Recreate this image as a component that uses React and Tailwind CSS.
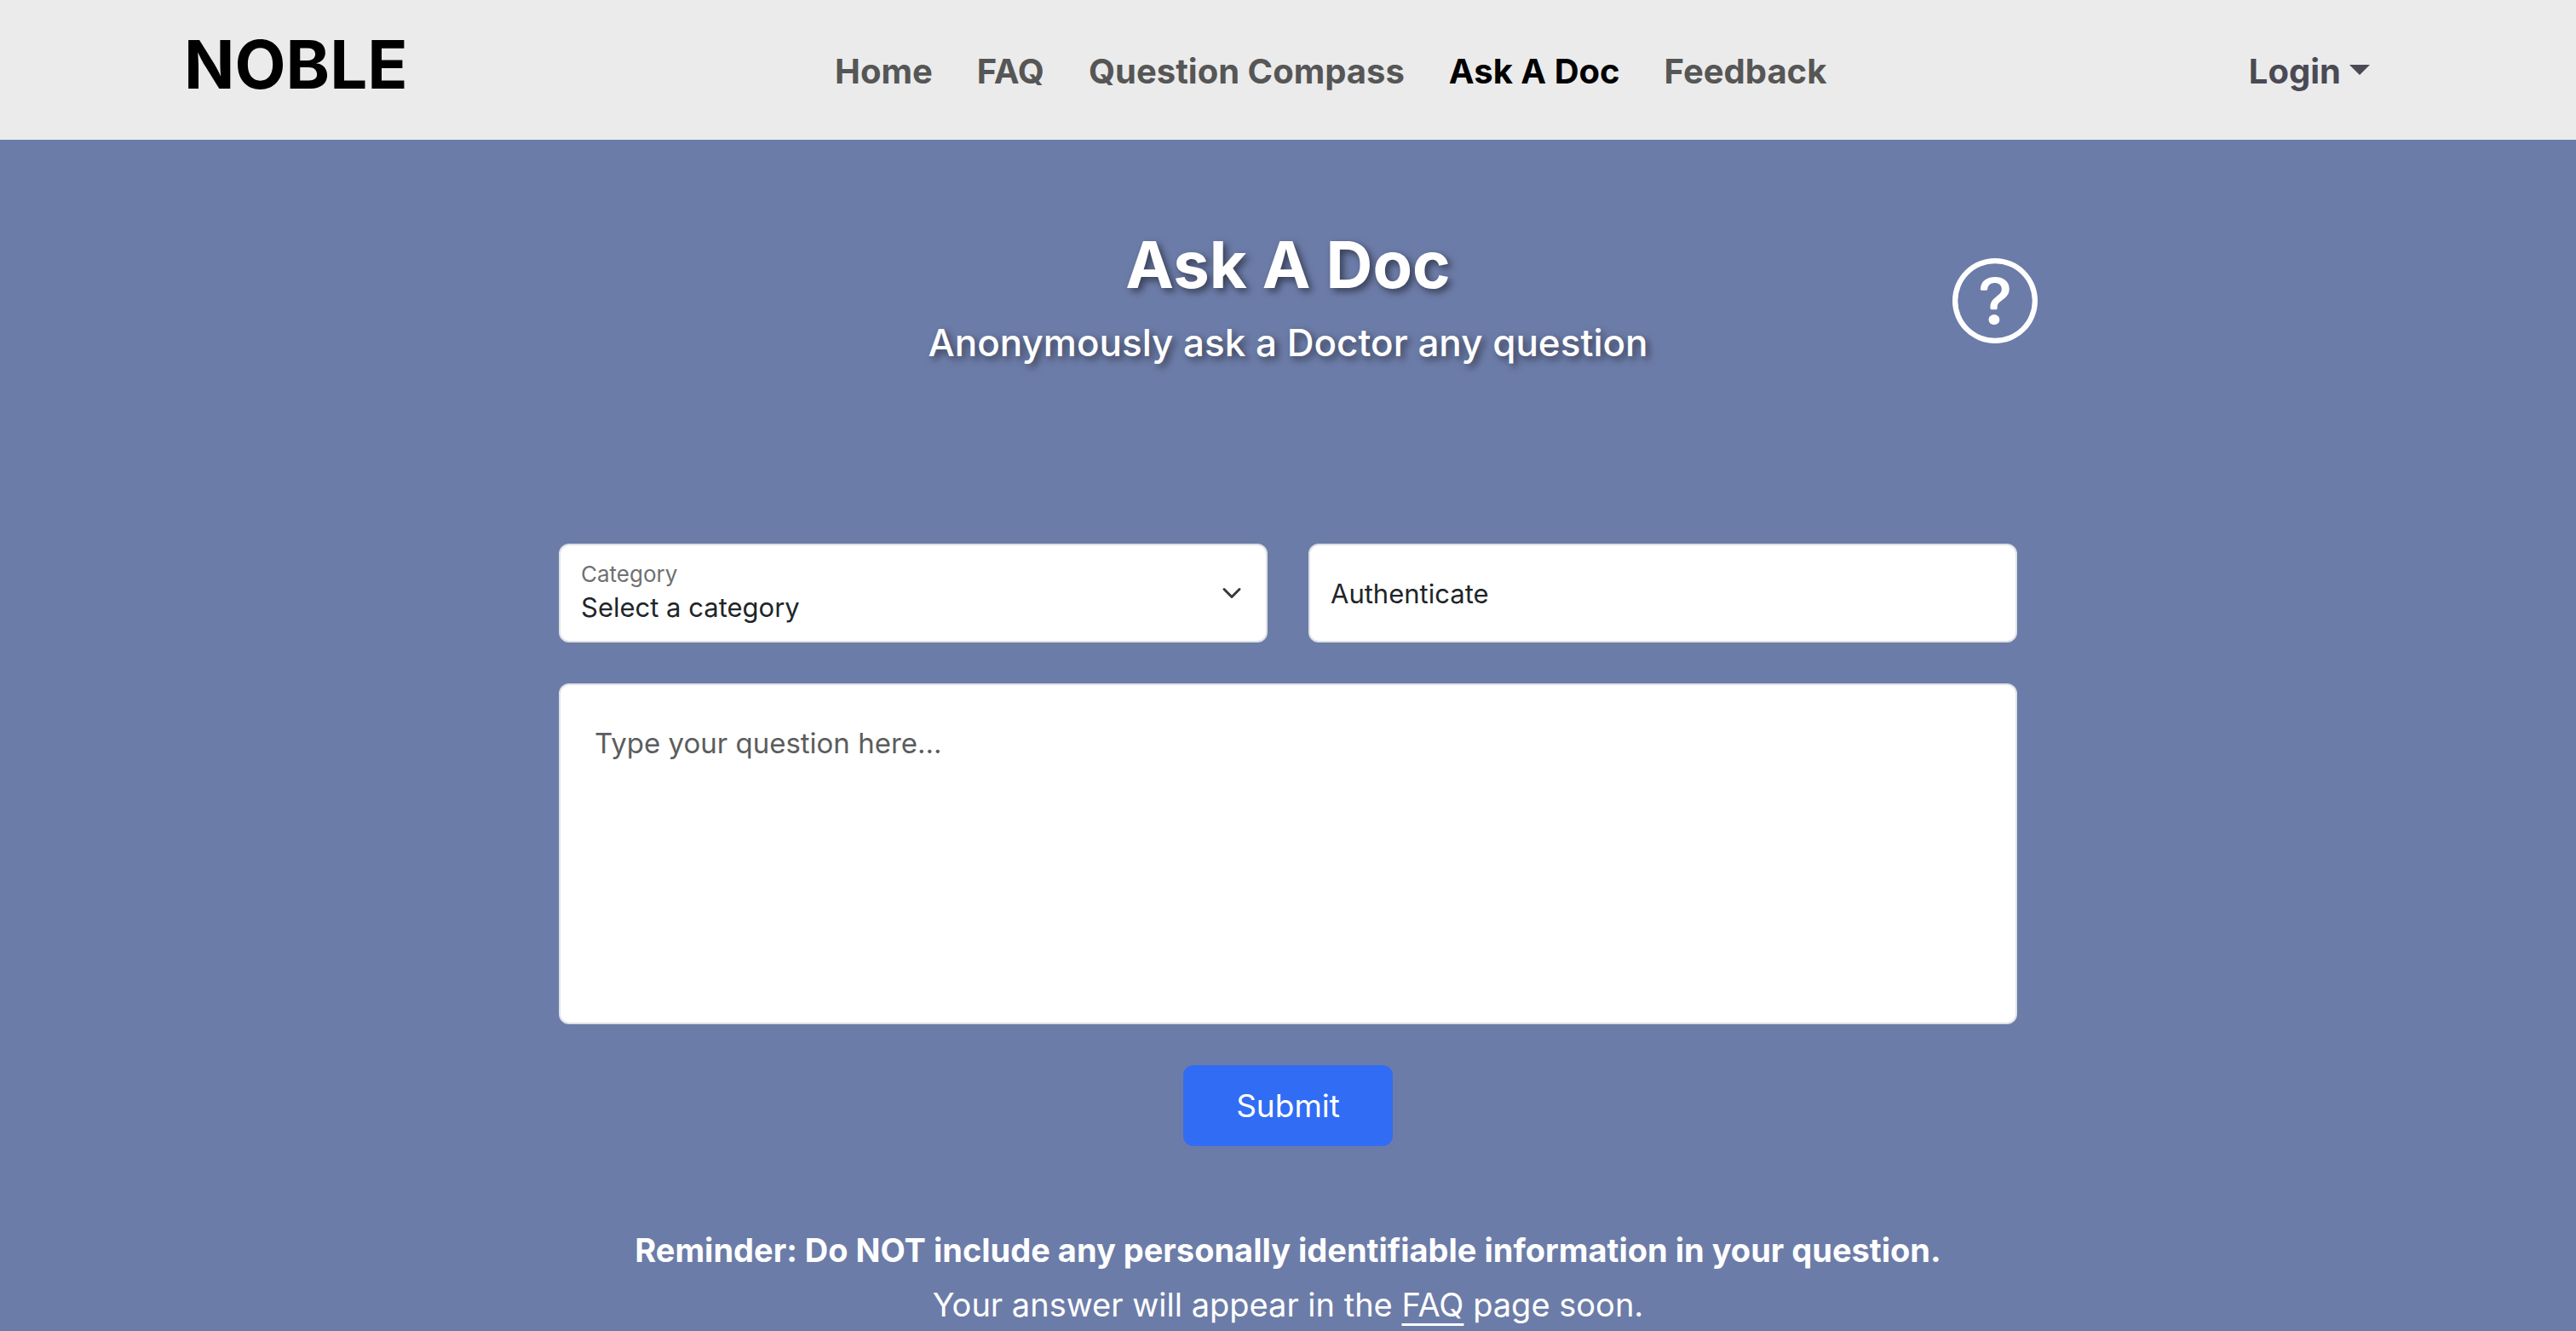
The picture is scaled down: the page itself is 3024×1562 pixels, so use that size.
import React from "react";
import { BsQuestionCircle } from "react-icons/bs";

const links = [
  { label: "Home" },
  { label: "FAQ" },
  { label: "Question Compass" },
  { label: "Ask A Doc", active: true },
  { label: "Feedback" },
];

function Header() {
  return (
    <header className="bg-[#ebebeb]">
      <div className="mx-auto flex h-[164px] w-full max-w-[2640px] items-center justify-between px-6">
        <a href="#home" className="mr-8 pb-3 text-[78px] leading-none font-bold text-black">
          NOBLE
        </a>
        <nav className="flex items-center gap-[52px] pt-1 text-[40px] leading-[60px] font-bold">
          {links.map((l) => (
            <a
              key={l.label}
              href={"#" + l.label}
              aria-current={l.active ? "page" : undefined}
              className={l.active ? "text-black" : "text-[#565656]"}
            >
              {l.label}
            </a>
          ))}
        </nav>
        <button
          type="button"
          className="flex items-center gap-2.5 px-[26px] pt-1 text-[40px] leading-[60px] font-bold text-[#4a4a55]"
        >
          Login
          <svg viewBox="0 0 24 12" className="mb-1 h-3 w-6 fill-current" aria-hidden="true">
            <path d="M0 0h24L12 12z" />
          </svg>
        </button>
      </div>
    </header>
  );
}

function Hero() {
  return (
    <section className="mx-auto grid w-full max-w-[1760px] grid-cols-[100px_1fr_100px] items-center pt-[98px]">
      <div className="col-start-2 pb-1.5 text-center text-white [text-shadow:4px_4px_8px_rgba(0,0,0,0.5)]">
        <h1 className="text-[76px] leading-[96px] font-bold">Ask A Doc</h1>
        <p className="mt-2 text-[44px] leading-[72px] font-medium">
          Anonymously ask a Doctor any question
        </p>
      </div>
      <button type="button" aria-label="Help" className="text-white">
        <BsQuestionCircle className="size-[100px]" />
      </button>
    </section>
  );
}

function QuestionForm() {
  return (
    <form className="mx-auto mt-[194px] w-full max-w-[1760px] px-6" onSubmit={(e) => e.preventDefault()}>
      <div className="grid grid-cols-2 gap-12">
        <div className="relative h-[116px]">
          <select
            id="category"
            className="h-full w-full appearance-none rounded-xl border-2 border-[#dee2e6] bg-white pt-[34px] pr-16 pl-6 text-[31px] text-[#212529]"
          >
            <option>Select a category</option>
          </select>
          <label
            htmlFor="category"
            className="pointer-events-none absolute top-4 left-[26px] text-[26px] leading-10 text-[#6f7071]"
          >
            Category
          </label>
          <svg
            viewBox="0 0 16 16"
            className="pointer-events-none absolute top-[46px] right-[30px] size-6"
            fill="none"
            stroke="#343a40"
            strokeWidth="2"
            strokeLinecap="round"
            strokeLinejoin="round"
            aria-hidden="true"
          >
            <path d="m2 5 6 6 6-6" />
          </svg>
        </div>
        <input
          type="text"
          aria-label="Authenticate"
          placeholder="Authenticate"
          className="h-[116px] w-full rounded-xl border-2 border-[#dee2e6] bg-white px-6 text-[31px] placeholder:text-[#212529]"
        />
      </div>
      <textarea
        aria-label="Your question"
        placeholder="Type your question here..."
        className="mt-12 block h-[400px] w-full resize-none rounded-xl border-2 border-[#dee2e6] bg-white px-10 py-10 text-[33px] leading-[56px] placeholder:text-[#5c5d5e]"
      />
      <div className="mt-12 flex justify-center">
        <button
          type="submit"
          className="h-[95px] rounded-xl bg-[#316cf4] px-[62px] text-[37px] leading-[60px] text-white"
        >
          Submit
        </button>
      </div>
    </form>
  );
}

export default function App() {
  return (
    <div className="min-h-screen bg-[#6c7ca8] font-['Inter','Liberation_Sans',sans-serif]">
      <Header />
      <main>
        <Hero />
        <QuestionForm />
        <div className="mt-[90px] text-center text-[38px] leading-16 text-white">
          <p className="font-bold">
            Reminder: Do NOT include any personally identifiable information in your question.
          </p>
          <p>
            Your answer will appear in the{" "}
            <a href="#faq" className="underline decoration-3 underline-offset-8">
              FAQ
            </a>{" "}
            page soon.
          </p>
        </div>
      </main>
    </div>
  );
}
